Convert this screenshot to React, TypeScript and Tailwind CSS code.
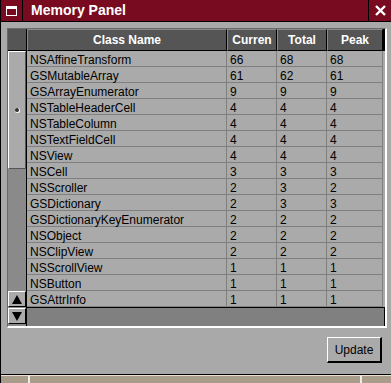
import React from 'react'

const rows: [string, number, number, number][] = [
  ['NSAffineTransform', 66, 68, 68],
  ['GSMutableArray', 61, 62, 61],
  ['GSArrayEnumerator', 9, 9, 9],
  ['NSTableHeaderCell', 4, 4, 4],
  ['NSTableColumn', 4, 4, 4],
  ['NSTextFieldCell', 4, 4, 4],
  ['NSView', 4, 4, 4],
  ['NSCell', 3, 3, 3],
  ['NSScroller', 2, 3, 2],
  ['GSDictionary', 2, 3, 3],
  ['GSDictionaryKeyEnumerator', 2, 2, 2],
  ['NSObject', 2, 2, 2],
  ['NSClipView', 2, 2, 2],
  ['NSScrollView', 1, 1, 1],
  ['NSButton', 1, 1, 1],
  ['GSAttrInfo', 1, 1, 1],
]

const font = { fontFamily: '"Liberation Sans", Arial, sans-serif' }

function HeaderCell({ label, w }: { label: string; w: string }) {
  return (
    <div className={`${w} h-[22px] shrink-0 bg-[#555555] border-t border-l border-t-[#8a8a8a] border-l-[#8a8a8a] border-b border-r border-b-black border-r-black flex items-center justify-center overflow-hidden text-white font-bold text-[12px] whitespace-nowrap`}>
      {label}
    </div>
  )
}

function ArrowButton({ up }: { up: boolean }) {
  return (
    <div className="w-[18px] h-[16px] bg-[#aaaaaa] border-t border-l border-white border-b border-r border-b-black border-r-black flex items-center justify-center">
      <svg width="10" height="9" viewBox="0 0 10 9">
        {up ? <polygon points="5,0 10,9 0,9" fill="#000" /> : <polygon points="0,0 10,0 5,9" fill="#000" />}
      </svg>
    </div>
  )
}

export default function App() {
  return (
    <div className="w-[391px] h-[383px] bg-[#a9a9a9] flex flex-col overflow-hidden border-l border-black" style={font}>
      {/* Title bar */}
      <div className="h-[22px] shrink-0 flex bg-[#780b1f] border-b border-black">
        <div className="w-[22px] h-full border-r border-black flex items-center justify-center">
          <div className="w-[11px] h-[10px] border border-white border-t-[3px]" />
        </div>
        <div className="flex-1 pl-[8px] flex items-center text-white font-bold text-[14px]">Memory Panel</div>
        <div className="w-[23px] h-full border-l border-black flex items-center justify-center">
          <svg width="11" height="11" viewBox="0 0 11 11">
            <path d="M1 1 L10 10 M10 1 L1 10" stroke="#fff" strokeWidth="2.4" />
          </svg>
        </div>
      </div>

      {/* Content */}
      <div className="flex-1 flex flex-col pl-[6px] pt-[6px] pr-[4px]">
        <div className="w-[380px] h-[300px] border-t border-l border-[#6a6a6a] border-b-2 border-r-2 border-b-white border-r-white flex bg-black">
          {/* Vertical scroller */}
          <div className="w-[19px] flex flex-col border-r border-black bg-[#8a8a8a]">
            <div className="h-[22px] bg-[#555555] border-b border-black shrink-0" />
            <div className="flex-1 flex flex-col">
              <div className="h-[118px] w-[18px] bg-[#aaaaaa] border-t border-l border-white border-b border-r border-b-[#555] border-r-[#555] flex items-center justify-center">
                <div className="w-[5px] h-[5px] rounded-full bg-[#333] border-b border-r border-white" />
              </div>
            </div>
            <ArrowButton up />
            <div className="h-[1px] bg-[#8a8a8a]" />
            <ArrowButton up={false} />
            <div className="h-[2px]" />
          </div>

          {/* Table */}
          <div className="flex-1 flex flex-col bg-[#7f7f7f]">
            <div className="flex bg-black">
              <HeaderCell label="Class Name" w="w-[200px]" />
              <HeaderCell label="Curren" w="w-[50px]" />
              <HeaderCell label="Total" w="w-[50px]" />
              <HeaderCell label="Peak" w="w-[56px]" />
            </div>
            <div className="flex flex-col bg-[#aaaaaa] border-b border-black">
              {rows.map(([name, cur, tot, peak]) => (
                <div key={name} className="flex h-[16px] text-[12px] text-black leading-[11px]">
                  <div className="w-[200px] pl-[3px] pt-[4px] border-b border-r border-[#7f7f7f] whitespace-nowrap">{name}</div>
                  <div className="w-[50px] pl-[3px] pt-[4px] border-b border-r border-[#7f7f7f]">{cur}</div>
                  <div className="w-[50px] pl-[3px] pt-[4px] border-b border-r border-[#7f7f7f]">{tot}</div>
                  <div className="w-[56px] pl-[3px] pt-[4px] border-b border-r border-[#7f7f7f]">{peak}</div>
                </div>
              ))}
            </div>
            <div className="flex-1 bg-[#808080] border-r border-black" />
          </div>
        </div>

        {/* Button row */}
        <div className="flex justify-end pt-[9px] pr-[5px]">
          <button className="w-[55px] h-[26px] bg-[#aaaaaa] border-t border-l border-white border-b-2 border-r-2 border-b-black border-r-black text-[12px] text-black flex items-center justify-center" style={font}>
            Update
          </button>
        </div>
      </div>

      {/* Resize bar */}
      <div className="h-[9px] shrink-0 border-t border-black flex bg-[#a99c8a]">
        <div className="w-[29px] border-t border-[#e8e0d0] border-r-2 border-r-[#f0ece4]" />
        <div className="flex-1 border-t border-[#e8e0d0] border-r-2 border-r-[#f0ece4]" />
        <div className="w-[29px] border-t border-[#e8e0d0]" />
      </div>
    </div>
  )
}
